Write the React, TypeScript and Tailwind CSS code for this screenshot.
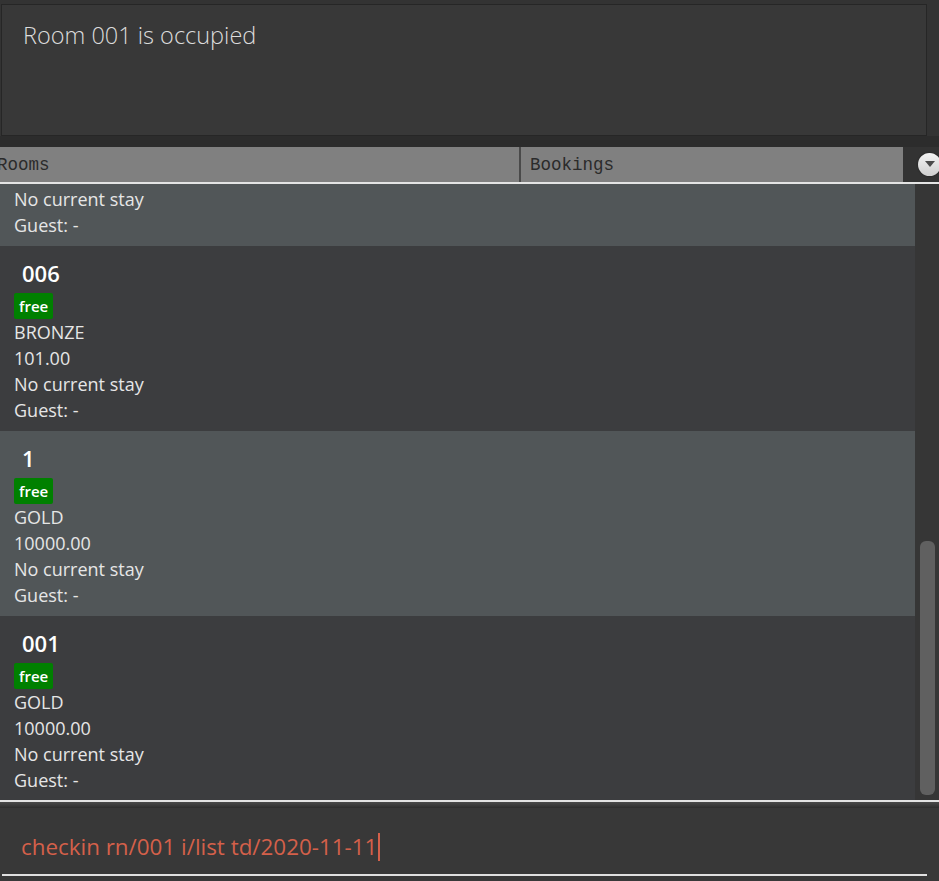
import React from "react";

type Room = { no: string; tier: string; price: string };

const font = { fontFamily: '"Open Sans", "Noto Sans", sans-serif' };

function RoomCard({ room, alt, className = "" }: { room: Room; alt: boolean; className?: string }) {
  return (
    <div
      className={`h-[185px] shrink-0 px-[14px] pt-[14px] pb-[8px] text-[#e6e6e6] ${alt ? "bg-[#515658]" : "bg-[#3c3d3f]"} ${className}`}
    >
      <div className="pl-[8px] text-[22px] font-semibold leading-[26px] text-white">{room.no}</div>
      <div className="mt-[7px] h-[26px]">
        <span className="inline-block h-[26px] rounded-[2px] bg-[#008000] px-[5px] text-[15px] font-semibold leading-[26px] text-white">
          free
        </span>
      </div>
      <div className="text-[18px] leading-[26px]">{room.tier}</div>
      <div className="text-[18px] leading-[26px]">{room.price}</div>
      <div className="text-[18px] leading-[26px]">No current stay</div>
      <div className="text-[18px] leading-[26px]">Guest: -</div>
    </div>
  );
}

export default function App() {
  const rooms: Room[] = [
    { no: "005", tier: "BRONZE", price: "101.00" },
    { no: "006", tier: "BRONZE", price: "101.00" },
    { no: "1", tier: "GOLD", price: "10000.00" },
    { no: "001", tier: "GOLD", price: "10000.00" },
  ];
  const mono = { fontFamily: '"Liberation Mono", "Courier New", monospace' };
  return (
    <div className="flex h-[881px] w-[939px] flex-col overflow-hidden bg-[#2e2e2e]" style={font}>
      {/* result display */}
      <div className="flex h-[147px] shrink-0 flex-col bg-[#333333] pt-[4px]">
        <div className="ml-[1px] h-[132px] w-[926px] border border-[#262626] bg-[#383838] px-[21px] pt-[14px]">
          <div className="text-[23.5px] font-light leading-[32px] text-[#dcdcdc]">Room 001 is occupied</div>
        </div>
        <div className="flex-1 bg-[#2c2c2c]" />
      </div>

      {/* tabs */}
      <div className="relative flex h-[35px] shrink-0 bg-[#333333]">
        <div className="flex w-[519px] items-center overflow-hidden bg-[#808080] pt-[2px] text-[17.5px] text-[#2b2b2b]" style={mono}>
          <span className="-ml-[3px]">Rooms</span>
        </div>
        <div className="w-[2px] bg-[#4a4a4a]" />
        <div className="flex w-[382px] items-center bg-[#808080] pl-[9px] pt-[2px] text-[17.5px] text-[#2b2b2b]" style={mono}>
          Bookings
        </div>
        <div className="flex flex-1 items-center justify-end">
          <div className="mr-[-2px] flex h-[23px] w-[23px] items-center justify-center rounded-full bg-gradient-to-b from-[#f4f4f4] to-[#cfcfcf] shadow-[0_0_2px_rgba(0,0,0,0.5)]">
            <svg width="10" height="7" viewBox="0 0 10 7">
              <path d="M0 0 L10 0 L5 6 Z" fill="#4a4a4a" />
            </svg>
          </div>
        </div>
      </div>

      {/* separator */}
      <div className="h-[2px] shrink-0 bg-[#e4e4e4]" />

      {/* list */}
      <div className="flex h-[616px] shrink-0 bg-[#383838]">
        <div className="flex w-[915px] flex-col overflow-hidden">
          <div className="-mt-[123px] flex flex-col">
            {rooms.map((r, i) => (
              <RoomCard key={i} room={r} alt={i % 2 === 0} />
            ))}
          </div>
        </div>
        <div className="flex-1 bg-[#363636] pl-[5px] pr-[4px] pt-[357px] pb-[5px]">
          <div className="h-full w-[15px] rounded-[6px] bg-[#606060]" />
        </div>
      </div>

      {/* bottom separator */}
      <div className="h-[2px] shrink-0 bg-[#e4e4e4]" />
      <div className="h-[6px] shrink-0 bg-gradient-to-b from-[#4a4a4a] to-[#2e2e2e]" />

      {/* command box */}
      <div className="flex flex-1 flex-col bg-[#383838]">
        <div className="flex h-[66px] items-center pl-[21px] pt-[12px]">
          <span className="text-[22.4px] leading-[32px] text-[#d4604a]">checkin rn/001 i/list td/2020-11-11</span>
          <span className="ml-[1px] h-[28px] w-[2px] bg-[#d4604a]" />
        </div>
        <div className="ml-[2px] h-[2px] w-[925px] bg-[#e0e0e0]" />
      </div>
    </div>
  );
}
